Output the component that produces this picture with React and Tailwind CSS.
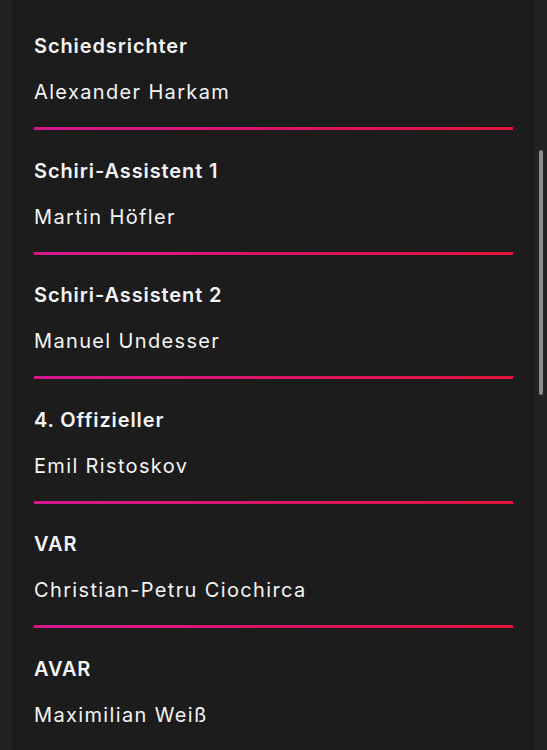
const officials = [
  { role: "Schiedsrichter", name: "Alexander Harkam" },
  { role: "Schiri-Assistent 1", name: "Martin Höfler" },
  { role: "Schiri-Assistent 2", name: "Manuel Undesser" },
  { role: "4. Offizieller", name: "Emil Ristoskov" },
  { role: "VAR", name: "Christian-Petru Ciochirca" },
  { role: "AVAR", name: "Maximilian Weiß" },
];

const App = () => {
  return (
    <div className="flex h-[750px] w-full overflow-hidden bg-[#1c1c1c] font-['Inter','Noto_Sans',sans-serif] text-[#f4f4f4]">
      <div className="w-[12px] shrink-0 bg-[#222222]" />
      <div className="flex-1 px-[22px] pt-[32px]">
        {officials.map((o, i) => (
          <div key={o.role}>
            <h3 className="text-[20px] font-semibold leading-[28px] tracking-[0.9px]">{o.role}</h3>
            <p className="mt-[18px] text-[20px] font-normal leading-[28px] tracking-[1.35px]">{o.name}</p>
            {i < officials.length - 1 && (
              <div className="mt-[21px] mb-[26.6px] h-[3px] bg-gradient-to-r from-[#d4168f] via-[#dc1468] to-[#e3143a]" />
            )}
          </div>
        ))}
      </div>
      <div className="flex w-[12px] shrink-0 justify-center bg-[#222222] pt-[150px]">
        <div className="h-[245px] w-[4px] rounded-full bg-[#8c8c8c]" />
      </div>
    </div>
  );
};

export default App;
